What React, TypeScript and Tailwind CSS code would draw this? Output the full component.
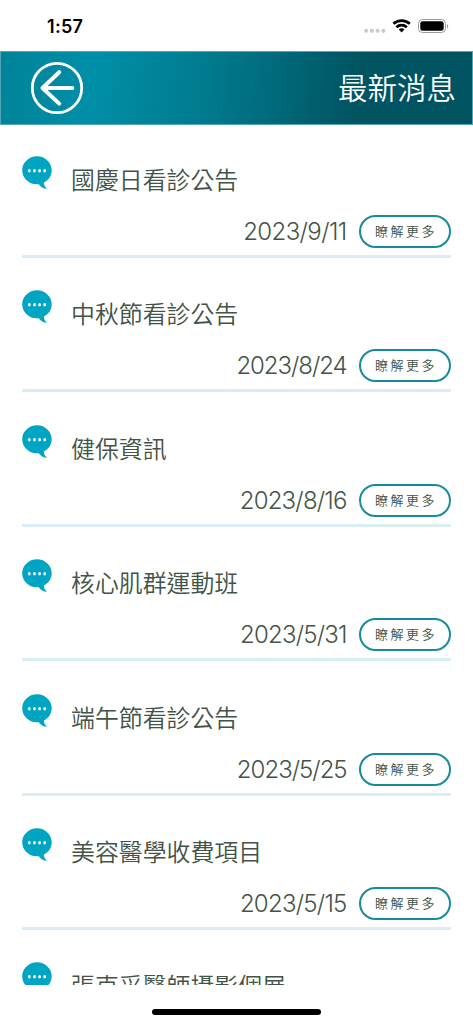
const items = [
  ["國慶日看診公告", "2023/9/11", "tracking-[-0.600px]"],
  ["中秋節看診公告", "2023/8/24", "tracking-[-1.050px]"],
  ["健保資訊", "2023/8/16", "tracking-[-0.800px]"],
  ["核心肌群運動班", "2023/5/31", "tracking-[-0.800px]"],
  ["端午節看診公告", "2023/5/25", "tracking-[-1.000px]"],
  ["美容醫學收費項目", "2023/5/15", "tracking-[-0.750px]"],
  ["張克采醫師攝影個展", "2023/5/8", "tracking-[-0.850px]"],
];

function StatusBar() {
  return (
    <div className="flex h-[51px] shrink-0 items-start justify-between pr-[24px] pl-[47px]">
      <span className="mt-[13px] font-['Inter',sans-serif] text-[18px] leading-[27px] font-semibold tracking-[0.3px] text-black">1:57</span>
      <svg className="mt-[16px]" width="86" height="20" viewBox="0 0 86 20">
        <g fill="#cbcbcb">
          <circle cx="3.2" cy="14.8" r="2.1" />
          <circle cx="8.9" cy="14.8" r="2.1" />
          <circle cx="14.6" cy="14.8" r="2.1" />
          <circle cx="20.3" cy="14.8" r="2.1" />
        </g>
        <g fill="none" stroke="#000" strokeWidth="2.7">
          <path d="M30.4 7.8a12 12 0 0 1 16.4 0" />
          <path d="M33.4 11.3a7.5 7.5 0 0 1 10.4 0" />
        </g>
        <path d="M35.8 13.6a4.2 4.2 0 0 1 5.6 0l-2.8 2.9z" fill="#000" />
        <rect x="55.500" y="3.500" width="27" height="13" rx="4" fill="none" stroke="#9b9b9b" />
        <rect x="57.300" y="5.200" width="23.400" height="9.600" rx="2.400" fill="#000" />
        <path d="M84 8v4.400c1.700-.7 1.700-3.700 0-4.400z" fill="#999" />
      </svg>
    </div>
  );
}

function ChatIcon() {
  return (
    <svg className="mt-[16px] shrink-0" width="30" height="34" viewBox="0 0 30 34">
      <path fill="#00a5c3" d="M15 .3C6.800.3.2 6.700.2 14.200c0 7.700 6.400 13.900 14.400 14.100.7 0 1.400 0 2.100-.1 2 2.600 4.600 4.400 8.500 4.600-2.200-1.700-3.300-3.800-3.400-6.400 5-2.500 7.900-6.900 7.900-12.200C29.700 6.700 23.200.300 15 .300z" />
      <g fill="#fff">
        <ellipse cx="7.300" cy="14.700" rx="1.400" ry="1.800" />
        <ellipse cx="12.500" cy="14.700" rx="1.400" ry="1.800" />
        <ellipse cx="17.600" cy="14.700" rx="1.400" ry="1.800" />
        <ellipse cx="22.700" cy="14.700" rx="1.400" ry="1.800" />
      </g>
    </svg>
  );
}

export default function App() {
  return (
    <div className="flex h-[1024px] w-[473px] flex-col overflow-hidden bg-white font-['Inter','Noto_Sans_CJK_TC',sans-serif] text-[#435347]">
      <StatusBar />
      <header className="flex h-[73.500px] shrink-0 items-center justify-between border border-[#55a6b5] bg-[linear-gradient(97deg,#008399_0%,#008fa8_20%,#007c90_42%,#006b7c_57%,#005563_74%,#005361_100%)] pr-[16px] pl-[29px]">
        <button aria-label="返回">
          <svg width="54" height="54" viewBox="0 0 54 54" fill="none" stroke="#fff" strokeLinecap="round" strokeLinejoin="round">
            <circle cx="27" cy="27" r="24.700" strokeWidth="2.800" />
            <path d="M42.300 27H12.500M29.200 11.200L12.500 27l16.700 15.600" strokeWidth="4" />
          </svg>
        </button>
        <h1 className="-mt-[4px] font-['Noto_Sans_CJK_TC',sans-serif] text-[29.500px] leading-[44px] font-[350] text-white">最新消息</h1>
      </header>
      <main className="h-[860.500px] shrink-0 overflow-hidden px-[22.400px] pt-[15.600px]">
        {items.map(([title, date, tracking]) => (
          <article key={title} className="flex h-[134.400px] flex-col">
            <div className="flex h-[75px] items-start">
              <ChatIcon />
              <h2 className="mt-[21px] ml-[18.600px] font-['Noto_Sans_CJK_TC',sans-serif] text-[23.900px] leading-[36px] font-[350]">{title}</h2>
            </div>
            <div className="flex h-[43px] items-start justify-end border-b-[3px] border-[#d9edf4]">
              <time className={`mr-[12px] text-[24px] leading-[34px] font-[350] ${tracking}`}>{date}</time>
              <button className="flex h-[33px] w-[92px] items-start justify-center rounded-full border-2 border-[#168b9e] pl-[3px] font-['Noto_Sans_CJK_TC',sans-serif] text-[13px] leading-[27px] font-[350] tracking-[2.500px] whitespace-nowrap">瞭解更多</button>
            </div>
          </article>
        ))}
      </main>
      <div className="mt-[24px] ml-[152px] h-[6px] w-[169px] rounded-full bg-black" />
    </div>
  );
}
